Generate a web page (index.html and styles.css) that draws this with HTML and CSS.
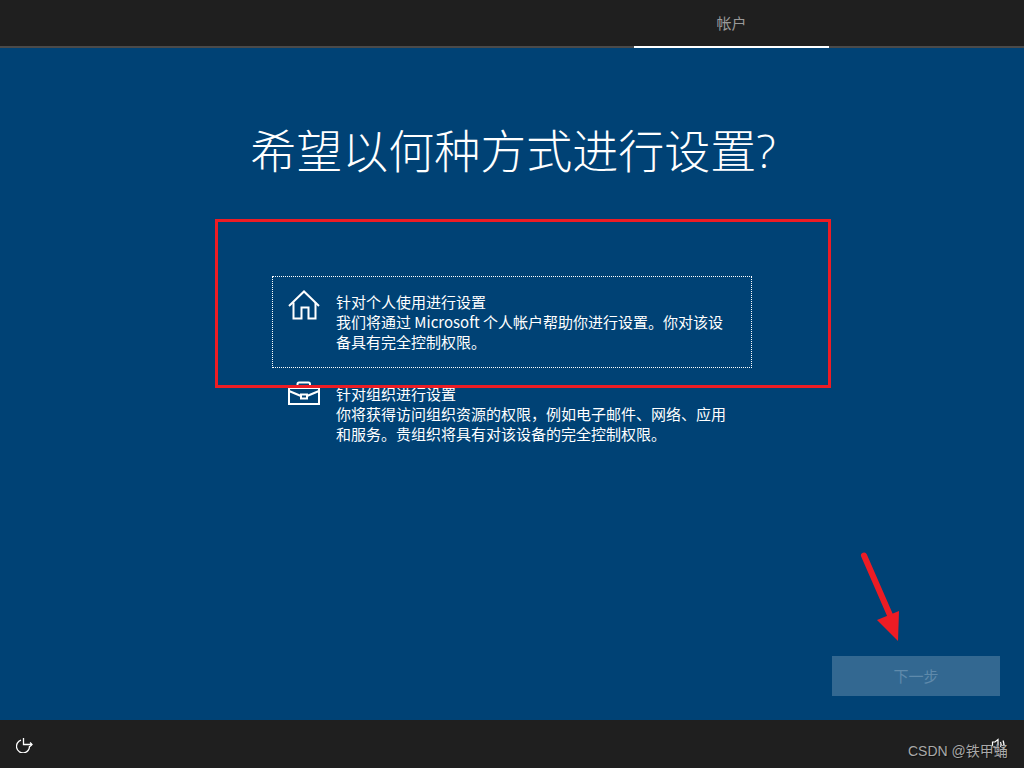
FILE: index.html
```html
<!DOCTYPE html>
<html lang="zh-CN">
<head>
<meta charset="utf-8">
<title>希望以何种方式进行设置?</title>
<link rel="stylesheet" href="styles.css">
</head>
<body>
<div class="screen">
  <header class="topbar">
    <div class="tab">帐户</div>
  </header>
  <main class="content">
    <h1 class="title">希望以何种方式进行设置?</h1>
    <div class="options">
      <div class="option option-focus">
        <svg class="icon icon-home" viewBox="0 0 32 32" width="32" height="32" fill="none" stroke="#fff" stroke-width="2">
          <path d="M1 16 16 1.500 31 16"/>
          <path d="M5.500 12.500V28.500H13.500V17.500H20.500V28.500H27.500V12.500"/>
        </svg>
        <div class="option-text">
          <div>针对个人使用进行设置</div>
          <div>我们将通过 Microsoft 个人帐户帮助你进行设置。你对该设备具有完全控制权限。</div>
        </div>
      </div>
      <div class="option option-plain">
        <svg class="icon icon-case" viewBox="0 0 32 24" width="32" height="24" fill="none" stroke="#fff" stroke-width="2">
          <path d="M9.500 7V3Q9.500 1.500 11 1.500H20.500Q22 1.500 22 3V7"/>
          <path d="M1 7H31V23H1Z"/>
          <path d="M1 10 13 15M19 15 31 10"/>
          <path d="M13 13.500H19V17.500H13Z"/>
        </svg>
        <div class="option-text">
          <div>针对组织进行设置</div>
          <div>你将获得访问组织资源的权限&#xFF0C;例如电子邮件、网络、应用和服务。贵组织将具有对该设备的完全控制权限。</div>
        </div>
      </div>
    </div>
    <div class="actions">
      <button class="next" type="button">下一步</button>
    </div>
  </main>
  <footer class="bottombar">
    <svg class="foot-icon" viewBox="0 0 18 18" width="18" height="18" fill="none" stroke="#fff" stroke-width="1.300">
      <path d="M5 5.200A6.500 6.500 0 1 0 13.500 11"/>
      <path d="M7.500 3V9.500H16"/>
      <path d="M14 7.500 16 9.500 14 11.500"/>
    </svg>
    <svg class="foot-icon" viewBox="0 0 18 18" width="18" height="18" fill="none" stroke="#fff" stroke-width="1.200">
      <path d="M2.500 7H5L8 4.500V14.500L5 12H2.500Z"/>
      <path d="M10.500 7Q11.800 9.500 10.500 12M13 5.500Q15 9.500 13 13.500"/>
    </svg>
  </footer>

  <div class="red-box"></div>
  <svg class="red-arrow" viewBox="0 0 50 96" width="50" height="96" fill="#ed1c24">
    <path d="M4 5.500 33 72" stroke="#ed1c24" stroke-width="6" stroke-linecap="round"/>
    <path d="M17 70 39 61 38 91Z"/>
  </svg>
  <div class="watermark">CSDN @铁甲蛹</div>
</div>
</body>
</html>
```
FILE: styles.css
```css
* { box-sizing: border-box; }
html, body { margin: 0; padding: 0; }
body {
  font-family: "Noto Sans CJK SC", "Liberation Sans", sans-serif;
  background: #004275;
  color: #fff;
}
.screen {
  position: relative;
  width: 1024px;
  height: 768px;
  overflow: hidden;
  display: flex;
  flex-direction: column;
}
.topbar {
  height: 48px;
  background: #1f1f1f;
  border-bottom: 2px solid #4a4a4a;
  padding-left: 634px;
  flex: none;
}
.tab {
  width: 195px;
  height: 48px;
  border-bottom: 2px solid #fff;
  color: #9a9a9a;
  font-size: 15px;
  line-height: 46px;
  text-align: center;
}
.content {
  flex: 1;
  display: flex;
  flex-direction: column;
  align-items: center;
  min-height: 0;
}
.title {
  margin: 68px 0 0 2px;
  height: 68px;
  font-family: "Open Sans", "Noto Sans CJK SC", sans-serif;
  font-size: 46px;
  line-height: 68px;
  font-weight: 300;
  white-space: nowrap;
}
.options {
  margin-top: 92px;
  width: 480px;
  display: flex;
  flex-direction: column;
}
.option {
  display: flex;
  gap: 16px;
  font-size: 15px;
  line-height: 20px;
}
.option-focus {
  height: 92px;
  padding: 15px 24px 0 15px;
  border: 1px dotted #fff;
}
.option-plain {
  height: 92px;
  padding: 16px 24px 0 16px;
}
.icon { flex: none; }
.icon-home { margin-top: -2px; }
.icon-case { margin-top: -3px; }
.option-text { flex: 1; min-width: 0; }
.actions {
  margin-top: auto;
  align-self: stretch;
  display: flex;
  justify-content: flex-end;
  padding: 0 24px 24px 0;
}
.next {
  width: 168px;
  height: 40px;
  border: 0;
  padding: 0 0 2px;
  background: #336891;
  color: #5f8aab;
  font: inherit;
  font-size: 15px;
}
.bottombar {
  height: 48px;
  flex: none;
  background: #1f1f1f;
  display: flex;
  justify-content: space-between;
  align-items: center;
  padding: 0 16px;
}
.red-box {
  position: absolute;
  left: 215px;
  top: 219px;
  width: 616px;
  height: 169px;
  border: 3px solid #ed1c24;
}
.red-arrow {
  position: absolute;
  left: 860px;
  top: 550px;
}
.watermark {
  position: absolute;
  left: 908px;
  top: 741px;
  font-family: "Liberation Sans", "Noto Sans CJK SC", sans-serif;
  font-size: 14px;
  line-height: 20px;
  color: #a9a9a9;
  text-shadow: 1px 1px 1px #111;
  white-space: nowrap;
}
```
